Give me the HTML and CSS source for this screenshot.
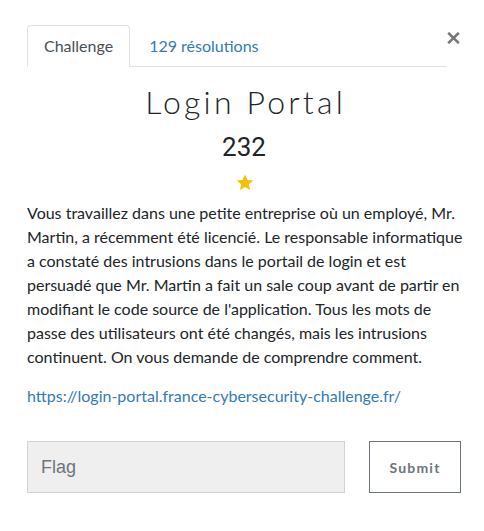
FILE: index.html
```html
<!DOCTYPE html>
<html lang="fr">
<head>
<meta charset="utf-8">
<title>Login Portal</title>
<link rel="stylesheet" href="styles.css">
</head>
<body>
<div class="modal">
  <div class="head">
    <ul class="tabs">
      <li class="tab active">Challenge</li>
      <li class="tab"><a href="#">129 résolutions</a></li>
    </ul>
    <button class="close" aria-label="Fermer">
      <svg width="13" height="12" viewBox="0 0 13 12"><path d="M1.2 0.8 L11.8 11.2 M11.8 0.8 L1.2 11.2" stroke="#777" stroke-width="2.6" fill="none"/></svg>
    </button>
  </div>
  <h2 class="title">Login Portal</h2>
  <h4 class="points">232</h4>
  <div class="stars">
    <svg width="18" height="17" viewBox="0 0 18 17"><polygon points="9,0.5 11.4,5.9 17.3,6.4 12.8,10.3 14.1,16.1 9,13.1 3.9,16.1 5.2,10.3 0.7,6.4 6.6,5.9" fill="#f2c200"/></svg>
  </div>
  <p class="desc">Vous travaillez dans une petite entreprise où un employé, Mr. Martin, a récemment été licencié. Le responsable informatique a constaté des intrusions dans le portail de login et est persuadé que Mr. Martin a fait un sale coup avant de partir en modifiant le code source de l'application. Tous les mots de passe des utilisateurs ont été changés, mais les intrusions continuent. On vous demande de comprendre comment.</p>
  <p class="link"><a href="#">https://login-portal.france-cybersecurity-challenge.fr/</a></p>
  <form class="flag-form">
    <input class="flag-input" type="text" placeholder="Flag">
    <button class="submit" type="button">Submit</button>
  </form>
</div>
</body>
</html>
```
FILE: styles.css
```css
* { box-sizing: border-box; }
html, body { margin: 0; padding: 0; background: #fff; }
body { font-family: Lato, "Open Sans", sans-serif; color: #212529; font-size: 16px; }
.modal { padding: 25px 23px 0 27px; }
.head { display: flex; align-items: flex-start; }
.tabs {
  list-style: none; margin: 0; padding: 0; display: flex;
  width: 420px; border-bottom: 1px solid #dee2e6;
}
.tab {
  padding: 8px 16px; line-height: 24px; margin-bottom: -1px;
  border: 1px solid transparent; border-radius: 4px 4px 0 0;
}
.tab.active { color: #495057; border-color: #dee2e6 #dee2e6 #fff; background: #fff; }
.tab a { color: #337ab7; text-decoration: none; margin-left: 2px; }
.close {
  margin: 7px 0 0 0; padding: 0; border: 0; background: none; display: flex;
}
.title {
  margin: 17px 0 0; text-align: center; font-weight: 300; font-size: 32px;
  line-height: 36px; letter-spacing: 3.2px; padding-left: 3.2px; color: #212529;
}
.points {
  margin: 12px 0 0; text-align: center; font-family: Roboto, "Liberation Sans", sans-serif;
  font-weight: 400; font-size: 26px; line-height: 31px; color: #212529;
}
.stars { margin-top: 11px; height: 17px; display: flex; justify-content: center; padding-left: 1px; }
.desc { margin: 10px -4px 0 0; line-height: 24px; color: #212529; }
.link { margin: 15px 0 0; line-height: 24px; }
.link a { color: #337ab7; text-decoration: none; }
.flag-form { display: flex; gap: 24px; margin-top: 33px; }
.flag-input {
  flex: 1; height: 52px; background: #efefef; border: 1px solid #ced4da;
  padding: 0 13px; font-family: "Liberation Sans", Arial, sans-serif; font-size: 18px; color: #495057;
  border-radius: 0; outline: none;
}
.flag-input::placeholder { color: #6c757d; }
.submit {
  width: 92px; height: 52px; background: #fff; border: 1px solid #6c757d;
  color: #6c757d; font-family: Lato, sans-serif; font-weight: 700; font-size: 14px;
  letter-spacing: 1.2px; border-radius: 0; padding: 0;
}
```
